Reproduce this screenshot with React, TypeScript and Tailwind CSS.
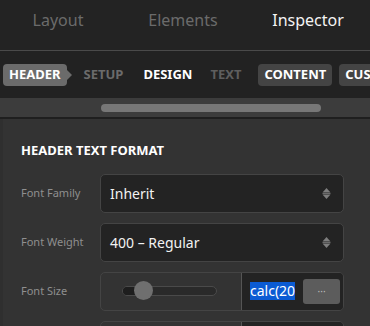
import React from 'react'

const font = { fontFamily: '"Noto Sans", "Open Sans", sans-serif' }

const SortIcon: React.FC = () => (
  <svg width="9" height="13" viewBox="0 0 9 13" className="text-[#7e7e7e]">
    <path d="M4.5 1 L8.5 5.6 H0.5 Z" fill="currentColor" />
    <rect x="0.5" y="6.1" width="8" height="0.8" fill="currentColor" />
    <path d="M0.5 7.4 H8.5 L4.5 12 Z" fill="currentColor" />
  </svg>
)

const Select: React.FC<{ value: string }> = ({ value }) => (
  <div className="flex h-[39px] flex-1 items-center justify-between rounded-[5px] border border-[#444] bg-[#232323] pl-[9px] pr-[12px]">
    <span className="text-[14px] text-[#f2f2f2]">{value}</span>
    <SortIcon />
  </div>
)

const Row: React.FC<{ label: string; children: React.ReactNode }> = ({ label, children }) => (
  <div className="flex items-center">
    <span className="w-[79px] text-[11px] text-[#8f8f8f]">{label}</span>
    {children}
  </div>
)

const App: React.FC = () => {
  return (
    <div className="h-[326px] w-[370px] overflow-hidden bg-[#222]" style={font}>
      <div className="flex h-[51px] items-start border-b border-[#4a4a4a] bg-[#232323] pt-[8px]">
        <div className="w-[116px] text-center text-[16px] leading-[24px] text-[#6b6b6b]">Layout</div>
        <div className="w-[134px] text-center text-[16px] leading-[24px] text-[#6b6b6b]">Elements</div>
        <div className="w-[116px] text-center text-[16px] leading-[24px] text-[#f4f4f4]">Inspector</div>
      </div>
      <div className="flex h-[47px] items-center whitespace-nowrap pl-[3px] pt-[1px] text-[13px] font-bold">
        <div className="relative mr-[17px] flex h-[22px] items-center rounded-[4px] bg-[#6b6b6b] px-[6px] text-white">
          HEADER
          <span className="absolute right-[-5px] top-[6px] h-0 w-0 border-y-[5px] border-l-[5px] border-y-transparent border-l-[#6b6b6b]" />
        </div>
        <div className="mr-[20px] text-[#6b6b6b]">SETUP</div>
        <div className="mr-[18px] text-white">DESIGN</div>
        <div className="mr-[17px] text-[#5e5e5e]">TEXT</div>
        <div className="mr-[7px] flex h-[22px] items-center rounded-[4px] bg-[#444] px-[6px] text-white">CONTENT</div>
        <div className="flex h-[22px] items-center rounded-l-[4px] bg-[#444] px-[6px] text-white">CUSTOM</div>
      </div>
      <div className="flex h-[19px] items-center bg-[#3c3c3c] pl-[101px]">
        <div className="h-[8px] w-[220px] rounded-full bg-[#777]" />
      </div>
      <div className="h-[2px] bg-[#1f1f1f]" />
      <div className="border-l-[3px] border-[#2f2f2f] bg-[#333] pl-[18px] pr-[26px] pt-[22px]">
        <div className="text-[13px] font-bold text-white">HEADER TEXT FORMAT</div>
        <div className="mt-[13px] flex flex-col gap-[10px]">
          <Row label="Font Family">
            <Select value="Inherit" />
          </Row>
          <Row label="Font Weight">
            <Select value="400 – Regular" />
          </Row>
          <Row label="Font Size">
            <div className="flex h-[39px] flex-1 overflow-hidden rounded-[5px] border border-[#444]">
              <div className="flex w-[140px] items-center pl-[21px]">
                <div className="relative h-[10px] w-[95px] rounded-full border border-[#4a4a4a] bg-[#2a2a2a]">
                  <div className="absolute left-0 top-0 h-full w-[20px] rounded-l-full bg-[#1e1e1e]" />
                  <div className="absolute left-[11px] top-[-6px] h-[19px] w-[19px] rounded-full bg-[#6f6f6f]" />
                </div>
              </div>
              <div className="flex flex-1 items-center border-l border-[#555] bg-[#232323] pl-[8px]">
                <span className="bg-[#0b5bd3] text-[14px] leading-[18px] text-white">calc(20</span>
                <div className="ml-[8px] flex h-[25px] w-[37px] items-center justify-center rounded-[3px] bg-[#5c5c5c] text-[10px] leading-none text-[#bbb]">
                  ···
                </div>
              </div>
            </div>
          </Row>
          <Row label="">
            <div className="flex h-[39px] flex-1 overflow-hidden rounded-[5px] border border-[#444]">
              <div className="w-[140px]" />
              <div className="flex-1 border-l border-[#555] bg-[#232323]" />
            </div>
          </Row>
        </div>
      </div>
    </div>
  )
}

export default App
